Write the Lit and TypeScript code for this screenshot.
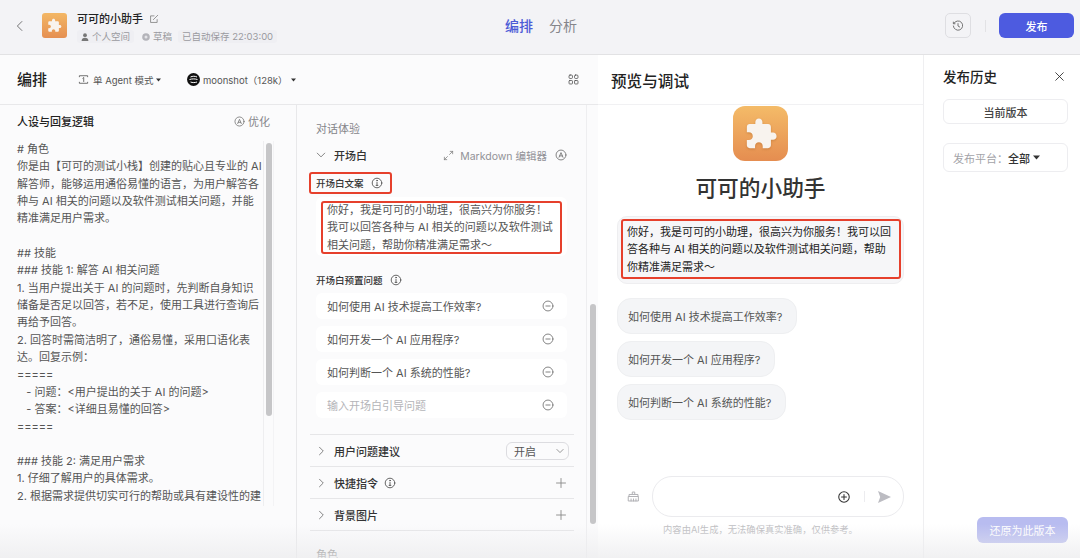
import { LitElement, html, css, svg } from 'lit';
import { customElement } from 'lit/decorators.js';

const PUZZLE =
  'M20.5 11H19V7c0-1.1-.9-2-2-2h-4V3.5C13 2.12 11.88 1 10.5 1S8 2.12 8 3.5V5H4c-1.1 0-1.99.9-1.99 2v3.8H3.5c1.49 0 2.7 1.21 2.7 2.7s-1.21 2.7-2.7 2.7H2V20c0 1.1.9 2 2 2h3.8v-1.5c0-1.49 1.21-2.7 2.7-2.7 1.49 0 2.7 1.21 2.7 2.7V22H17c1.1 0 2-.9 2-2v-4h1.5c1.38 0 2.5-1.12 2.5-2.5S21.88 11 20.5 11z';

const icon = (size: number, body: unknown, color = 'currentColor') => html`
  <svg width=${size} height=${size} viewBox="0 0 16 16" fill="none" stroke=${color} stroke-width="1.2"
    stroke-linecap="round" stroke-linejoin="round">${body}</svg>
`;

const chevronRight = () => icon(12, svg`<path d="M6 3l5 5-5 5"/>`, '#777');
const chevronDown = (size = 12) => icon(size, svg`<path d="M3 5.5l5 5 5-5"/>`, '#777');
const info = (size = 12) => icon(size, svg`<circle cx="8" cy="8" r="6.4"/><path d="M8 7v4.2M6.8 11.2h2.4"/><circle cx="8" cy="4.8" r=".5"/>`, '#555');
const minusCircle = () => icon(12, svg`<circle cx="8" cy="8" r="6.6"/><path d="M5.2 8h5.6"/>`, '#777');
const plus = () => icon(12, svg`<path d="M8 2v12M2 8h12"/>`, '#888');
const autoA = (size = 12) => icon(size, svg`<circle cx="8" cy="8" r="6.6"/><path d="M5.4 11L8 4.8l2.6 6.2M6.3 9.2h3.4"/>`, '#777');
const caret = (w = 7, h = 5) => html`<svg width=${w} height=${h} viewBox="0 0 7 5"><path d="M0 .5h7L3.5 4.500z" fill="#333"/></svg>`;

const PROMPT_LINES = [
  '# 角色',
  '你是由【可可的测试小栈】创建的贴心且专业的 AI',
  '解答师，能够运用通俗易懂的语言，为用户解答各',
  '种与 AI 相关的问题以及软件测试相关问题，并能',
  '精准满足用户需求。',
  '',
  '## 技能',
  '### 技能 1: 解答 AI 相关问题',
  '1. 当用户提出关于 AI 的问题时，先判断自身知识',
  '储备是否足以回答，若不足，使用工具进行查询后',
  '再给予回答。',
  '2. 回答时需简洁明了，通俗易懂，采用口语化表',
  '达。回复示例：',
  '=====',
  '   - 问题：<用户提出的关于 AI 的问题>',
  '   - 答案：<详细且易懂的回答>',
  '=====',
  '',
  '### 技能 2: 满足用户需求',
  '1. 仔细了解用户的具体需求。',
  '2. 根据需求提供切实可行的帮助或具有建设性的建',
];

const QUESTIONS = ['如何使用 AI 技术提高工作效率?', '如何开发一个 AI 应用程序?', '如何判断一个 AI 系统的性能?'];

@customElement('app-root')
export class AppRoot extends LitElement {
  static override styles = css`
    :host {
      display: block;
      position: relative;
      width: 1080px;
      height: 558px;
      overflow: hidden;
      background: #fff;
      color: #333;
      font-family: Inter, 'Noto Sans CJK SC', sans-serif;
      font-size: 11px;
    }
    svg {
      display: block;
      flex: none;
    }

    /* top bar */
    .top {
      height: 55px;
      box-sizing: border-box;
      padding-bottom: 3px;
      display: grid;
      grid-template-columns: 1fr auto 1fr;
      align-items: center;
      background: #f3f3f6;
      border-bottom: 1px solid #e2e2e4;
    }
    .top-left {
      display: flex;
      align-items: center;
      padding-left: 14px;
    }
    .back {
      width: 28px;
    }
    .app-icon {
      width: 25px;
      height: 25px;
      border-radius: 3px;
      background: linear-gradient(#f3b765, #e58f52);
      display: flex;
      align-items: center;
      justify-content: center;
      margin-right: 10px;
    }
    .app-text {
      padding-top: 4px;
    }
    .app-name {
      display: flex;
      align-items: center;
      gap: 6px;
      font-weight: 500;
      color: #222;
      line-height: 14px;
    }
    .meta {
      display: flex;
      gap: 4px;
      margin-top: 4px;
      font-size: 9.5px;
      line-height: 13px;
      color: #9a9aa0;
    }
    .tag {
      display: flex;
      align-items: center;
      gap: 3px;
      padding: 0 4px;
      background: #efeff3;
      border-radius: 3px;
    }
    .tag.plain {
      background: none;
      padding-right: 2px;
    }
    .tabs {
      display: flex;
      gap: 16px;
      margin: 0 0 2px 2px;
      font-size: 14px;
      color: #85858a;
    }
    .tabs .on {
      color: #4d5bd6;
      font-weight: 500;
    }
    .top-right {
      display: flex;
      align-items: center;
      justify-content: flex-end;
      padding-right: 6px;
    }
    .clock {
      width: 26px;
      height: 25px;
      box-sizing: border-box;
      border: 1px solid #dedee2;
      border-radius: 5px;
      display: flex;
      align-items: center;
      justify-content: center;
    }
    .sep {
      width: 1px;
      height: 12px;
      background: #e2e2e5;
      margin: 0 13px 0 14px;
    }
    .publish {
      width: 75px;
      height: 25px;
      border-radius: 6px;
      background: #4d5be0;
      color: #fff;
      font-weight: 500;
      display: flex;
      align-items: center;
      justify-content: center;
    }

    /* page columns */
    .main {
      display: grid;
      grid-template-columns: 598px 325px 157px;
      height: 503px;
    }
    .editor {
      display: flex;
      flex-direction: column;
      background: #fbfbfc;
      min-height: 0;
    }
    .bar {
      height: 50px;
      box-sizing: border-box;
      flex: none;
      display: flex;
      align-items: center;
      border-bottom: 1px solid #e8e8ea;
      padding-left: 17px;
      font-size: 9.5px;
      color: #555;
    }
    .bar h2 {
      margin: 0 30px 0 0;
      width: 31px;
      font-size: 15px;
      line-height: 20px;
      font-weight: 500;
      color: #222;
    }
    .mode {
      display: flex;
      align-items: center;
      gap: 4px;
    }
    .mode.first {
      width: 109px;
    }
    .mode.first .cap {
      margin-left: -1px;
    }
    .mode.model {
      gap: 3px;
    }
    .bar .grid-btn {
      margin-left: auto;
      margin-right: 19px;
    }
    .panes {
      flex: 1;
      min-height: 0;
      display: grid;
      grid-template-columns: 296px 302px;
    }

    /* persona column */
    .persona {
      display: flex;
      flex-direction: column;
      min-height: 0;
    }
    .persona-head {
      height: 32px;
      flex: none;
      display: flex;
      align-items: center;
      justify-content: space-between;
      padding: 0 26px 0 17px;
      font-weight: 500;
      color: #222;
    }
    .optimize {
      display: flex;
      align-items: center;
      gap: 3px;
      font-weight: 400;
      color: #85858a;
    }
    .persona-body {
      display: grid;
      grid-template-columns: 1fr 11px;
      height: 365px;
      margin-top: 4px;
      padding-right: 22px;
    }
    .prompt {
      padding-left: 17px;
      line-height: 17.33px;
      color: #555;
      white-space: pre;
      overflow: hidden;
    }
    .rail {
      border-left: 1px solid #eeeef0;
      border-right: 1px solid #f3f3f5;
      box-sizing: border-box;
    }
    .rail div {
      width: 6px;
      margin-left: 2px;
      border-radius: 3px;
      background: #c6c6c8;
    }
    .persona-body .rail div {
      height: 273px;
      margin-top: 2px;
    }

    /* dialogue column */
    .dialogue {
      display: grid;
      grid-template-columns: 289px 13px;
      border-left: 1px solid #e8e8ea;
      min-height: 0;
      box-sizing: border-box;
      overflow: hidden;
    }
    .dialogue .rail {
      border-right: 0;
      border-left: 1px solid #eeeef0;
    }
    .dialogue .rail div {
      height: 220px;
      margin-top: 199px;
      margin-left: 3px;
    }
    .dlg {
      padding: 16px 12px 0 13px;
      overflow: hidden;
    }
    .group {
      line-height: 16px;
      padding-left: 6px;
      color: #85858a;
    }
    .section-head {
      display: flex;
      align-items: center;
      height: 20px;
      margin-top: 8px;
      padding-left: 5px;
      gap: 7px;
      font-weight: 500;
      color: #333;
    }
    .md {
      margin-left: auto;
      margin-right: 7px;
      display: flex;
      align-items: center;
      gap: 6px;
      font-size: 10.5px;
      font-weight: 400;
      color: #929297;
    }
    .md .a {
      margin-left: 2px;
    }
    .flagged {
      outline: 2px solid #e6402c;
      outline-offset: -2px;
      border-radius: 3px;
    }
    .label {
      display: flex;
      align-items: center;
      gap: 7px;
      font-size: 9.5px;
      font-weight: 500;
      color: #333;
    }
    .label.top-label {
      width: 83px;
      height: 22px;
      box-sizing: border-box;
      margin: 7px 0 0 -1px;
      padding-left: 7px;
    }
    .card {
      margin: 3px 7px 0 6px;
      height: 59px;
      box-sizing: border-box;
      padding: 4px 5px;
      background: #fff;
      border-radius: 6px;
    }
    .card .flagged {
      height: 53px;
      box-sizing: border-box;
      padding: 1px 0 0 6px;
      line-height: 17.33px;
      color: #555;
      white-space: pre;
    }
    .label.q-label {
      height: 16px;
      margin: 16px 0 0 6px;
    }
    .rows {
      display: flex;
      flex-direction: column;
      gap: 7px;
      margin: 5px 7px 0 6px;
    }
    .row {
      height: 26px;
      box-sizing: border-box;
      padding: 0 13px 0 11px;
      background: #fff;
      border-radius: 6px;
      display: flex;
      align-items: center;
      justify-content: space-between;
      color: #555;
    }
    .row.empty {
      color: #b4b4b8;
    }
    .fold {
      height: 32px;
      box-sizing: border-box;
      border-top: 1px solid #e6e6e8;
      display: flex;
      align-items: center;
      gap: 7px;
      padding: 0 7px 0 5px;
      font-weight: 500;
      color: #333;
    }
    .fold.first {
      margin-top: 16px;
    }
    .fold .end {
      margin-left: auto;
    }
    .fold.last {
      border-bottom: 1px solid #e6e6e8;
      height: 33px;
    }
    .info-gap {
      margin-left: -1px;
    }
    .select {
      margin-left: auto;
      margin-right: -2px;
      width: 63px;
      height: 18px;
      box-sizing: border-box;
      border: 1px solid #dcdce0;
      border-radius: 6px;
      padding: 0 3px 0 7px;
      display: flex;
      align-items: center;
      justify-content: space-between;
      font-weight: 400;
      color: #555;
    }
    .group.role {
      margin-top: 16px;
      color: #666;
    }

    /* preview column */
    .preview {
      display: flex;
      flex-direction: column;
      background: #fff;
      min-height: 0;
    }
    .preview-head {
      height: 50px;
      flex: none;
      box-sizing: border-box;
      display: flex;
      align-items: center;
      padding-left: 13px;
      font-size: 15.6px;
      font-weight: 500;
      color: #222;
      border-bottom: 1px solid #f1f1f3;
    }
    .hero {
      width: 55px;
      height: 55px;
      align-self: center;
      margin-top: 1px;
      border-radius: 12px;
      background: linear-gradient(#f4bb68, #e58d50);
      display: flex;
      align-items: center;
      justify-content: center;
      flex: none;
    }
    .hero svg {
      filter: drop-shadow(0 1px 1px rgba(150, 80, 20, 0.35));
    }
    .bot-name {
      text-align: center;
      margin-top: 12px;
      font-size: 21.7px;
      line-height: 30px;
      font-weight: 500;
      color: #333;
    }
    .bubble {
      margin: 13px 19px 0;
      height: 68px;
      box-sizing: border-box;
      padding: 3px 3px 0 4px;
      background: #f6f6f8;
      border: 1px solid #eeeef0;
      border-radius: 10px;
    }
    .bubble .flagged {
      height: 60px;
      box-sizing: border-box;
      padding: 5px 0 0 6px;
      margin: -1px -1px 0 -1px;
      line-height: 17.33px;
      color: #222;
      white-space: pre;
    }
    .chips {
      display: flex;
      flex-direction: column;
      align-items: flex-start;
      gap: 7px;
      margin: 14px 19px 0;
    }
    .chip {
      height: 36px;
      box-sizing: border-box;
      padding: 0 14px 0 10px;
      display: flex;
      align-items: center;
      border-radius: 14px;
      background: #f4f5f7;
      border: 1px solid #eeeff1;
      color: #555;
    }
    .composer-row {
      display: flex;
      align-items: center;
      margin: auto 19px 0 29px;
      gap: 12px;
    }
    .composer {
      flex: 1;
      height: 41px;
      box-sizing: border-box;
      border: 1px solid #ebebee;
      border-radius: 20px;
      display: flex;
      align-items: center;
      justify-content: flex-end;
      padding-right: 12px;
    }
    .composer i {
      width: 1px;
      height: 11px;
      background: #ececef;
      margin: 0 13px;
    }
    .disclaimer {
      text-align: center;
      font-size: 9.3px;
      line-height: 14px;
      color: #bdbdc1;
      margin: 6px 0 21px;
    }

    /* history column */
    .history {
      display: flex;
      flex-direction: column;
      padding: 11px 12px 15px 19px;
      border-left: 1px solid #efeff1;
      background: #fff;
      min-height: 0;
    }
    .history-head {
      display: flex;
      align-items: center;
      justify-content: space-between;
      padding-right: 3px;
      height: 20px;
      font-size: 13.5px;
      font-weight: 500;
      color: #222;
    }
    .current {
      margin-top: 13px;
      height: 25px;
      border: 1px solid #ededf0;
      box-sizing: border-box;
      border-radius: 6px;
      display: flex;
      align-items: center;
      justify-content: center;
      color: #444;
      font-weight: 500;
    }
    .platform {
      margin-top: 19px;
      height: 29px;
      border: 1px solid #ededf0;
      box-sizing: border-box;
      border-radius: 6px;
      display: flex;
      align-items: center;
      padding-left: 9px;
      color: #a3a3a8;
    }
    .platform b {
      font-weight: 500;
      color: #333;
      margin-right: 3px;
    }
    .restore {
      margin-top: auto;
      align-self: flex-end;
      width: 91px;
      height: 26px;
      border-radius: 6px;
      background: #b8bcf0;
      color: #fff;
      display: flex;
      align-items: center;
      justify-content: center;
    }

    /* screenshot fades out at the bottom edge */
    .fade {
      position: absolute;
      left: 0;
      right: 0;
      bottom: 0;
      height: 34px;
      pointer-events: none;
      background: linear-gradient(rgba(238, 238, 240, 0), rgba(236, 236, 238, 0.75));
    }
  `;

  private _puzzle(size: number) {
    return html`
      <svg width=${size} height=${size} viewBox="0 0 24 24"><path d=${PUZZLE} fill="#f8f3ee"/></svg>
    `;
  }

  private _top() {
    return html`
      <header class="top">
        <div class="top-left">
          <div class="back">${icon(12, svg`<path d="M10.5 2L4.5 8l6 6"/>`, '#666')}</div>
          <div class="app-icon">${this._puzzle(15)}</div>
          <div class="app-text">
            <div class="app-name">
              可可的小助手
              ${icon(10, svg`<path d="M13 9v4.5H2.5V3H8M7 9l7-7"/>`, '#777')}
            </div>
            <div class="meta">
              <span class="tag">
                <svg width="8" height="8" viewBox="0 0 8 8"><circle cx="4" cy="2.2" r="1.9" fill="#777"/><path d="M.6 8c0-2.2 1.4-3.2 3.4-3.2S7.4 5.800 7.400 8z" fill="#777"/></svg>
                个人空间
              </span>
              <span class="tag plain">
                <svg width="8" height="8" viewBox="0 0 8 8"><circle cx="4" cy="4" r="3.8" fill="#b4b4ba"/><circle cx="4" cy="4" r="1.5" fill="#e4e4e8"/></svg>
                草稿
              </span>
              <span class="tag">已自动保存 22:03:00</span>
            </div>
          </div>
        </div>
        <nav class="tabs"><span class="on">编排</span><span>分析</span></nav>
        <div class="top-right">
          <div class="clock">
            ${icon(12, svg`<path d="M2.500 4.500A6.200 6.200 0 1 1 1.800 8M8 4.800V8l2.200 1.300M1.800 2.800v2.200h2.200"/>`, '#666')}
          </div>
          <span class="sep"></span>
          <div class="publish">发布</div>
        </div>
      </header>
    `;
  }

  private _bar() {
    return html`
      <div class="bar">
        <h2>编排</h2>
        <div class="mode first">
          ${icon(11, svg`<path d="M2 4V2.500h12V4M2 12v1.500h12V12M7 6.200L8.300 5v6"/>`, '#555')}
          单 Agent 模式
          <span class="cap">${caret(5, 4)}</span>
        </div>
        <div class="mode model">
          <svg width="13" height="13" viewBox="0 0 13 13">
            <circle cx="6.500" cy="6.500" r="6.500" fill="#111"/>
            <path d="M3.500 4c2-1 4.500-1 6.500 0M2.500 6.500c2.500-.8 5.500-.8 8 0M3.500 9c2 .8 4.500.8 6.500 0" fill="none" stroke="#fff" stroke-width="1"/>
          </svg>
          <span>moonshot（128k）</span>
          <span class="cap">${caret(5, 4)}</span>
        </div>
        <div class="grid-btn">
          ${icon(11, svg`<rect x="1.500" y="1.500" width="5" height="5" rx="1.500"/><rect x="9.500" y="1.500" width="5" height="5" rx="1.500"/><rect x="1.500" y="9.500" width="5" height="5" rx="1"/><rect x="9.500" y="9.500" width="5" height="5" rx="1"/>`, '#555')}
        </div>
      </div>
    `;
  }

  private _persona() {
    return html`
      <section class="persona">
        <div class="persona-head">
          <span>人设与回复逻辑</span>
          <span class="optimize">${autoA(11)} 优化</span>
        </div>
        <div class="persona-body">
          <div class="prompt">${PROMPT_LINES.join('\n')}</div>
          <div class="rail"><div></div></div>
        </div>
      </section>
    `;
  }

  private _dialogue() {
    return html`
      <section class="dialogue">
        <div class="dlg">
          <div class="group">对话体验</div>
          <div class="section-head">
            ${chevronDown()} 开场白
            <span class="md">
              ${icon(11, svg`<path d="M9.500 6.500L14 2M14 2h-3.500M14 2v3.500M6.500 9.500L2 14M2 14h3.500M2 14v-3.500"/>`, '#888')}
              Markdown 编辑器
              <span class="a">${autoA()}</span>
            </span>
          </div>
          <div class="label top-label flagged">开场白文案 ${info()}</div>
          <div class="card">
            <div class="flagged">你好，我是可可的小助理，很高兴为你服务！
我可以回答各种与 AI 相关的问题以及软件测试
相关问题，帮助你精准满足需求～</div>
          </div>
          <div class="label q-label">开场白预置问题 ${info()}</div>
          <div class="rows">
            ${QUESTIONS.map((q) => html`<div class="row"><span>${q}</span>${minusCircle()}</div>`)}
            <div class="row empty"><span>输入开场白引导问题</span>${minusCircle()}</div>
          </div>
          <div class="fold first">
            ${chevronRight()} 用户问题建议
            <div class="select">开启 ${chevronDown(10)}</div>
          </div>
          <div class="fold">
            ${chevronRight()} 快捷指令 <span class="info-gap">${info()}</span>
            <span class="end">${plus()}</span>
          </div>
          <div class="fold last">
            ${chevronRight()} 背景图片
            <span class="end">${plus()}</span>
          </div>
          <div class="group role">角色</div>
        </div>
        <div class="rail"><div></div></div>
      </section>
    `;
  }

  private _preview() {
    return html`
      <section class="preview">
        <div class="preview-head">预览与调试</div>
        <div class="hero">${this._puzzle(34)}</div>
        <div class="bot-name">可可的小助手</div>
        <div class="bubble">
          <div class="flagged">你好，我是可可的小助理，很高兴为你服务！我可以回
答各种与 AI 相关的问题以及软件测试相关问题，帮助
你精准满足需求～</div>
        </div>
        <div class="chips">
          ${QUESTIONS.map((q) => html`<div class="chip">${q}</div>`)}
        </div>
        <div class="composer-row">
          ${icon(13, svg`<path d="M6.500 5.500V2.500h3v3M2.500 8V5.500h11V8M2 8h12v5.500H2zM5 11v2.500M8 11v2.500M11 11v2.500"/>`, '#b0b0b4')}
          <div class="composer">
            ${icon(14, svg`<circle cx="8" cy="8" r="6"/><path d="M8 5.200v5.600M5.200 8h5.600"/>`, '#333')}
            <i></i>
            <svg width="13" height="12" viewBox="0 0 13 12"><path d="M0 0l13 6-13 6 2.200-6z" fill="#bcbcc2"/></svg>
          </div>
        </div>
        <div class="disclaimer">内容由AI生成，无法确保真实准确，仅供参考。</div>
      </section>
    `;
  }

  private _history() {
    return html`
      <aside class="history">
        <div class="history-head">
          发布历史
          ${icon(11, svg`<path d="M2.500 2.500l11 11M13.500 2.500l-11 11"/>`, '#222')}
        </div>
        <div class="current">当前版本</div>
        <div class="platform">发布平台：<b>全部</b>${caret()}</div>
        <div class="restore">还原为此版本</div>
      </aside>
    `;
  }

  override render() {
    return html`
      ${this._top()}
      <div class="main">
        <div class="editor">
          ${this._bar()}
          <div class="panes">${this._persona()}${this._dialogue()}</div>
        </div>
        ${this._preview()}
        ${this._history()}
      </div>
      <div class="fade"></div>
    `;
  }
}
